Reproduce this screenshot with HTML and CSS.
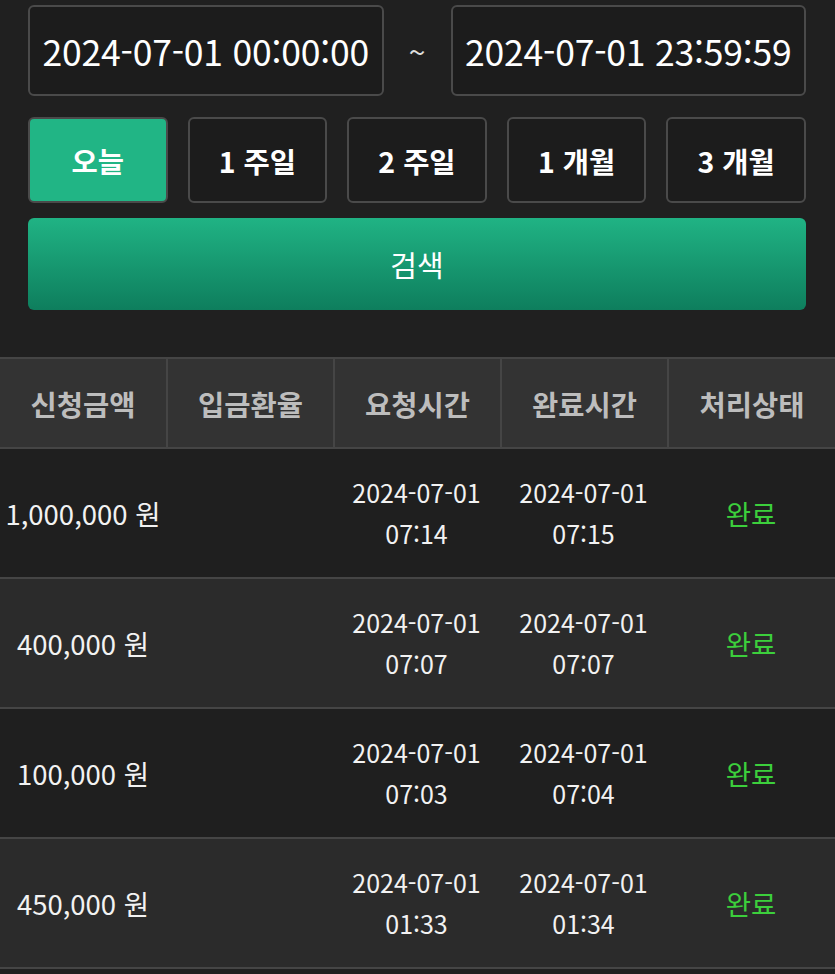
FILE: index.html
```html
<!DOCTYPE html>
<html lang="ko">
<head>
<meta charset="utf-8">
<link rel="stylesheet" href="styles.css">
</head>
<body>
<div class="filter">
  <div class="dates">
    <div class="date-box">2024-07-01 00:00:00</div>
    <div class="tilde">~</div>
    <div class="date-box">2024-07-01 23:59:59</div>
  </div>
  <div class="periods">
    <div class="period active">오늘</div>
    <div class="period">1 주일</div>
    <div class="period">2 주일</div>
    <div class="period">1 개월</div>
    <div class="period">3 개월</div>
  </div>
  <div class="search">검색</div>
</div>
<div class="table">
  <div class="row head">
    <div class="cell">신청금액</div>
    <div class="cell">입금환율</div>
    <div class="cell">요청시간</div>
    <div class="cell">완료시간</div>
    <div class="cell">처리상태</div>
  </div>
  <div class="row">
    <div class="cell">1,000,000 원</div>
    <div class="cell"></div>
    <div class="cell dt">2024-07-01<br>07:14</div>
    <div class="cell dt">2024-07-01<br>07:15</div>
    <div class="cell status">완료</div>
  </div>
  <div class="row alt">
    <div class="cell">400,000 원</div>
    <div class="cell"></div>
    <div class="cell dt">2024-07-01<br>07:07</div>
    <div class="cell dt">2024-07-01<br>07:07</div>
    <div class="cell status">완료</div>
  </div>
  <div class="row">
    <div class="cell">100,000 원</div>
    <div class="cell"></div>
    <div class="cell dt">2024-07-01<br>07:03</div>
    <div class="cell dt">2024-07-01<br>07:04</div>
    <div class="cell status">완료</div>
  </div>
  <div class="row alt">
    <div class="cell">450,000 원</div>
    <div class="cell"></div>
    <div class="cell dt">2024-07-01<br>01:33</div>
    <div class="cell dt">2024-07-01<br>01:34</div>
    <div class="cell status">완료</div>
  </div>
</div>
</body>
</html>
```

FILE: styles.css
```css
html, body {
  margin: 0;
  padding: 0;
  background: #202020;
  color: #ffffff;
  font-family: "Noto Sans CJK KR", "Noto Sans", sans-serif;
}

.filter {
  padding: 5px 29px 0 28px;
}

.dates {
  display: flex;
  align-items: center;
}

.date-box {
  flex: 1;
  height: 91px;
  box-sizing: border-box;
  border: 2px solid #4a4a4a;
  border-radius: 6px;
  background: #1c1c1c;
  display: flex;
  align-items: center;
  justify-content: center;
  font-size: 35.5px;
  letter-spacing: -0.2px;
  white-space: nowrap;
}

.tilde {
  width: 67px;
  text-align: center;
  font-size: 30px;
  color: #e0e0e0;
}

.periods {
  display: grid;
  grid-template-columns: repeat(5, 1fr);
  gap: 20px;
  margin-top: 21px;
}

.period {
  height: 86px;
  box-sizing: border-box;
  border: 2px solid #4a4a4a;
  border-radius: 6px;
  background: #1c1c1c;
  display: flex;
  align-items: center;
  justify-content: center;
  font-size: 28.5px;
  font-weight: 700;
}

.period.active {
  background: #21b585;
}

.search {
  margin-top: 15px;
  height: 92px;
  border-radius: 6px;
  background: linear-gradient(180deg, #20b384 0%, #0e7e5d 100%);
  display: flex;
  align-items: center;
  justify-content: center;
  font-size: 29px;
}

.table {
  margin-top: 47px;
  border-top: 2px solid #454545;
}

.row {
  display: grid;
  grid-template-columns: 166px 167px 167px 167px 1fr;
  height: 130px;
  box-sizing: border-box;
  border-bottom: 2px solid #454545;
  background: #1f1f1f;
}

.row.alt {
  background: #2b2b2b;
}

.row.head {
  height: 90px;
  background: #333333;
}

.cell {
  display: flex;
  align-items: center;
  justify-content: center;
  text-align: center;
  font-size: 27.5px;
  color: #f2f2f2;
  white-space: nowrap;
}

.head .cell {
  color: #bdbdbd;
  font-size: 28.5px;
  font-weight: 700;
  border-left: 2px solid #454545;
}

.head .cell:first-child {
  border-left: none;
}

.cell.dt {
  font-size: 25px;
  line-height: 41px;
}

.cell.status {
  color: #3ccf3c;
}
```
